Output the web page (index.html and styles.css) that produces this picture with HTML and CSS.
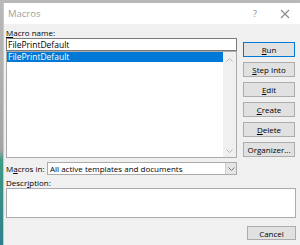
FILE: index.html
```html
<!DOCTYPE html>
<html lang="en">
<head>
  <meta charset="UTF-8">
  <title>Macros</title>
  <link rel="stylesheet" href="styles.css">
</head>
<body>
  <div class="screen">
    <div class="dialog">
      <div class="titlebar">
        <span class="title">Macros</span>
        <span class="help">?</span>
        <span class="close">
          <svg width="10" height="10" viewBox="0 0 10 10"><path d="M1 1L9 9M9 1L1 9" stroke="#8a8a8a" stroke-width="1.1"/></svg>
        </span>
      </div>
      <div class="body">
        <div class="main">
          <div class="left">
            <div class="label"><u>M</u>acro name:</div>
            <div class="input">FilePrintDefault</div>
            <div class="list">
              <div class="items">
                <div class="item selected">FilePrintDefault</div>
              </div>
              <div class="scrollbar">
                <svg width="7" height="4" viewBox="0 0 7 4"><path d="M0.5 3.5L3.5 0.5L6.5 3.5" fill="none" stroke="#b5b5b5"/></svg>
                <svg width="7" height="4" viewBox="0 0 7 4"><path d="M0.5 0.5L3.5 3.5L6.5 0.5" fill="none" stroke="#b5b5b5"/></svg>
              </div>
            </div>
          </div>
          <div class="buttons">
            <button class="btn default"><u>R</u>un</button>
            <button class="btn"><u>S</u>tep Into</button>
            <button class="btn"><u>E</u>dit</button>
            <button class="btn"><u>C</u>reate</button>
            <button class="btn"><u>D</u>elete</button>
            <button class="btn">Organizer...</button>
          </div>
        </div>
        <div class="macros-in">
          <span class="label">M<u>a</u>cros in:</span>
          <div class="select">
            <span class="select-text">All active templates and documents</span>
            <span class="select-arrow">
              <svg width="7" height="4" viewBox="0 0 7 4"><path d="M0.5 0.5L3.5 3.5L6.5 0.5" fill="none" stroke="#777"/></svg>
            </span>
          </div>
        </div>
        <div class="label desc-label">Descr<u>i</u>ption:</div>
        <div class="description"></div>
        <div class="footer">
          <button class="btn cancel">Cancel</button>
        </div>
      </div>
    </div>
  </div>
</body>
</html>
```

FILE: styles.css
```css
* {
  box-sizing: border-box;
}
body {
  margin: 0;
  font-family: "Open Sans", "Noto Sans", sans-serif;
  font-size: 8px;
  color: #000;
}
.screen {
  width: 300px;
  height: 245px;
  padding: 3px 0 0 3px;
  background: linear-gradient(to bottom, #b9b9b9 0, #a4a4a4 150px, #3f9a86 160px, #2f7f8a 245px);
  overflow: hidden;
}
.dialog {
  width: 297px;
  height: 242px;
  background: #f0f0f0;
  border-left: 1px solid #c8c8c8;
}
.titlebar {
  height: 21px;
  background: #fff;
  display: flex;
  align-items: center;
  padding-left: 4px;
}
.title {
  flex: 1;
  font-size: 9.5px;
  color: #a0a0a0;
}
.help {
  width: 30px;
  color: #8a8a8a;
  font-size: 9px;
  text-align: center;
}
.close {
  width: 30px;
  display: flex;
  justify-content: center;
}
.body {
  padding: 4px 4px 0 2px;
}
.main {
  display: flex;
  gap: 6px;
}
.left {
  width: 231px;
}
.label {
  height: 10px;
  line-height: 10px;
  white-space: nowrap;
}
.input {
  height: 13px;
  line-height: 11px;
  font-size: 8.5px;
  background: #fff;
  border: 1px solid #7a7a7a;
  padding-left: 1px;
}
.list {
  height: 107px;
  background: #fff;
  border: 1px solid #ababab;
  display: flex;
}
.items {
  flex: 1;
}
.item {
  height: 10px;
  line-height: 10px;
  font-size: 8.5px;
  padding-left: 1px;
}
.selected {
  background: #0078d7;
  color: #fff;
}
.scrollbar {
  width: 13px;
  background: #f0f0f0;
  display: flex;
  flex-direction: column;
  justify-content: space-between;
  align-items: center;
  padding: 6px 0 4px;
}
.scrollbar svg {
  display: block;
}
.buttons {
  width: 52px;
  padding-top: 14px;
  display: flex;
  flex-direction: column;
  gap: 5px;
}
.btn {
  height: 15px;
  padding: 0;
  font-family: inherit;
  font-size: 8px;
  color: #000;
  background: #e1e1e1;
  border: 1px solid #adadad;
  border-radius: 0;
}
.default {
  border: 1px solid #0078d7;
  box-shadow: inset 0 0 0 1px #e1e1e1;
}
.macros-in {
  display: flex;
  align-items: center;
  margin-top: 4px;
}
.macros-in .label {
  width: 41px;
}
.select {
  width: 190px;
  height: 13px;
  background: #fff;
  border: 1px solid #ababab;
  display: flex;
}
.select-text {
  flex: 1;
  line-height: 11px;
  padding-left: 2px;
}
.select-arrow {
  width: 11px;
  background: #e5e5e5;
  border-left: 1px solid #cfcfcf;
  display: flex;
  align-items: center;
  justify-content: center;
}
.select-arrow svg {
  display: block;
}
.desc-label {
  margin-top: 3px;
}
.description {
  height: 30px;
  background: #fff;
  border: 1px solid #ababab;
}
.footer {
  display: flex;
  justify-content: flex-end;
  margin-top: 8px;
}
.cancel {
  width: 49px;
  height: 14px;
}
```
